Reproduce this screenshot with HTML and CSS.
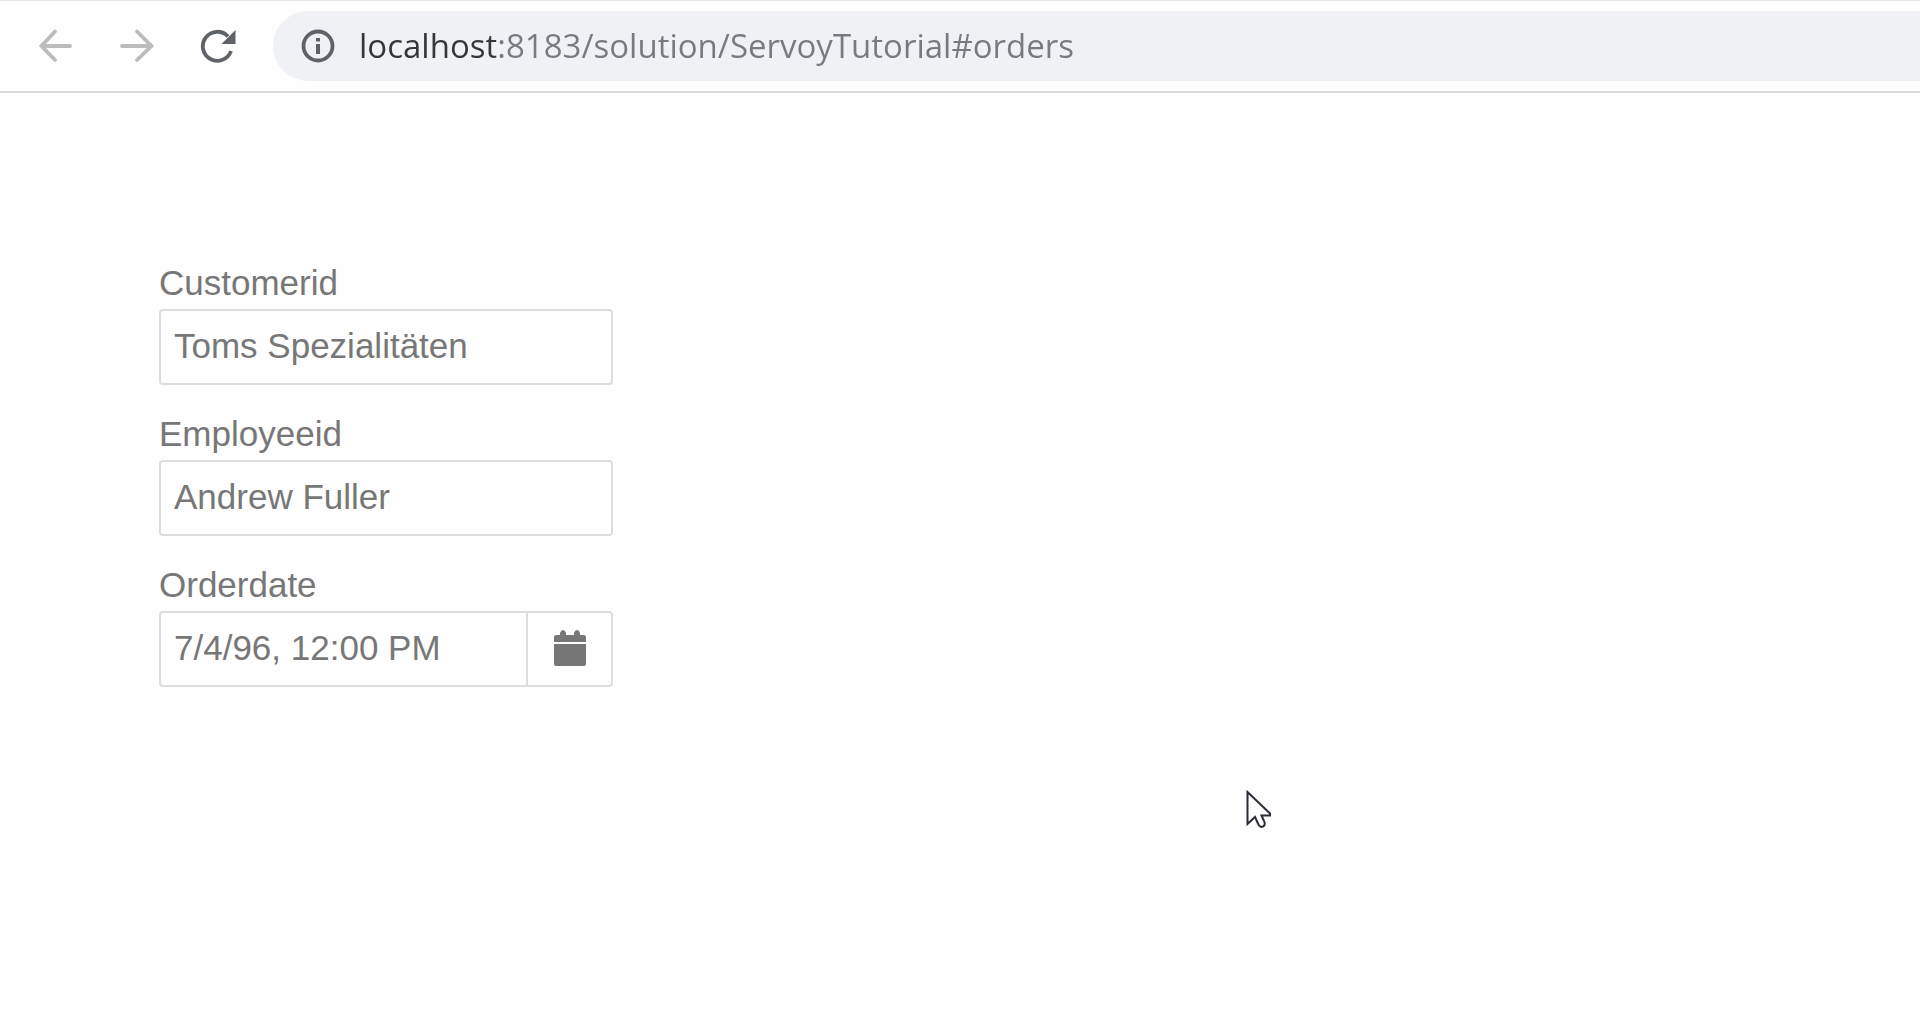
FILE: index.html
```html
<!DOCTYPE html>
<html lang="en">
<head>
    <meta charset="UTF-8">
    <meta name="viewport" content="width=device-width, initial-scale=1.0">
    <title>ServoyTutorial</title>
    <link rel="stylesheet" href="styles.css">
</head>
<body>
    <!-- Browser toolbar -->
    <header class="toolbar">
        <button type="button" class="nav-button" aria-label="Back" disabled>
            <svg class="nav-icon" viewBox="0 0 36 36">
                <path d="M32 18H4M17 3.500L3.500 18L17 32" fill="none" stroke="currentColor" stroke-width="3.800" stroke-linecap="round"/>
            </svg>
        </button>
        <button type="button" class="nav-button" aria-label="Forward" disabled>
            <svg class="nav-icon" viewBox="0 0 36 36">
                <path d="M3 18H32M18 3.500L32.500 18L18 32" fill="none" stroke="currentColor" stroke-width="3.800" stroke-linecap="round"/>
            </svg>
        </button>
        <button type="button" class="nav-button" aria-label="Reload">
            <svg class="nav-icon" viewBox="0 0 36 36">
                <path d="M31 23A14.500 14.500 0 1 1 28 8.500" fill="none" stroke="currentColor" stroke-width="3.800"/>
                <path d="M35.500 2V16H21.500Z" fill="currentColor"/>
            </svg>
        </button>
        <div class="address-bar">
            <svg class="info-icon" viewBox="0 0 34 34" aria-hidden="true">
                <circle cx="17" cy="17" r="14.500" fill="none" stroke="currentColor" stroke-width="3.800"/>
                <path d="M15 15H19V25H15ZM15 9H19V12.500H15Z" fill="currentColor"/>
            </svg>
            <input type="text" class="address-input" aria-label="Address" value="localhost:8183/solution/ServoyTutorial#orders" spellcheck="false">
        </div>
    </header>

    <!-- Order form -->
    <main class="content">
        <form class="order-form">
            <div class="field">
                <label for="customerid">Customerid</label>
                <input type="text" id="customerid" name="customerid" value="Toms Spezialitäten" spellcheck="false">
            </div>
            <div class="field">
                <label for="employeeid">Employeeid</label>
                <input type="text" id="employeeid" name="employeeid" value="Andrew Fuller" spellcheck="false">
            </div>
            <div class="field">
                <label for="orderdate">Orderdate</label>
                <div class="input-group">
                    <input type="text" id="orderdate" name="orderdate" value="7/4/96, 12:00 PM">
                    <button type="button" class="calendar-button" aria-label="Open calendar">
                        <svg class="calendar-icon" viewBox="0 0 32 36">
                            <path d="M0 12V7Q0 5 3 5H6V3Q7 0 9 0T12 3V5H20V3Q21 0 23 0T26 3V5H29Q32 5 32 7V12ZM0 14H32V34Q32 36 30 36H2Q0 36 0 34Z" fill="currentColor"/>
                        </svg>
                    </button>
                </div>
            </div>
        </form>
    </main>

    <svg class="cursor" viewBox="0 0 26 40" aria-hidden="true">
        <path d="M1.500 2V34L9 27L12 33.500Q14 38 17 36.500T18 31L15.500 25.500H24V23.500Z" fill="#fff" stroke="#2c2c38" stroke-width="2"/>
    </svg>
</body>
</html>
```

FILE: styles.css
```css
* {
    box-sizing: border-box;
}
body {
    font-family: "Liberation Sans", Arial, sans-serif;
    font-size: 35px;
    line-height: 40px;
    margin: 0;
    color: #777;
    background-color: #fefefe;
}
button,
input {
    font: inherit;
    color: inherit;
    margin: 0;
}
.toolbar {
    display: flex;
    align-items: center;
    gap: 45px;
    padding: 10px 0 10px 38px;
    border-top: 1px solid #e6e7ec;
    border-bottom: 2px solid #dadada;
}
.nav-button {
    display: flex;
    padding: 0;
    border: none;
    background: none;
    color: #5f6368;
}
.nav-button:disabled {
    color: #babcbe;
}
.nav-icon {
    width: 36px;
    height: 36px;
}
.address-bar {
    display: flex;
    flex: 1;
    align-items: center;
    gap: 24px;
    height: 70px;
    margin-left: -8px;
    padding-left: 28px;
    border-radius: 35px 0 0 35px;
    background-color: #f0f1f4;
}
.info-icon {
    width: 34px;
    height: 34px;
    color: #5f6368;
}
.address-input {
    flex: 1;
    padding: 0;
    border: none;
    outline: none;
    font-family: "Open Sans", "Segoe UI", sans-serif;
    font-size: 33px;
    line-height: 48px;
    /* host name is darker than the rest of the address */
    color: transparent;
    background: linear-gradient(90deg, #35363a 137px, #777a7e 137px);
    -webkit-background-clip: text;
    background-clip: text;
}
.content {
    padding: 170px 159px;
}
.order-form {
    display: flex;
    flex-direction: column;
    gap: 29px;
    max-width: 454px;
}
.field {
    display: flex;
    flex-direction: column;
    gap: 6px;
}
.field input {
    width: 100%;
    height: 76px;
    padding: 0 13px 2px;
    border: 2px solid #dcdde0;
    border-radius: 4px;
    outline: none;
    background-color: #fefefe;
}
.input-group {
    display: flex;
}
.field .input-group input {
    flex: 1;
    min-width: 0;
    border-right: none;
    border-radius: 4px 0 0 4px;
}
.calendar-button {
    display: flex;
    align-items: center;
    justify-content: center;
    width: 87px;
    padding: 0 0 2px;
    border: 2px solid #dcdde0;
    border-radius: 0 4px 4px 0;
    background-color: #fefefe;
}
.calendar-icon {
    width: 32px;
    height: 36px;
}
.cursor {
    position: absolute;
    left: 1246px;
    top: 790px;
    width: 26px;
    height: 40px;
}
```
